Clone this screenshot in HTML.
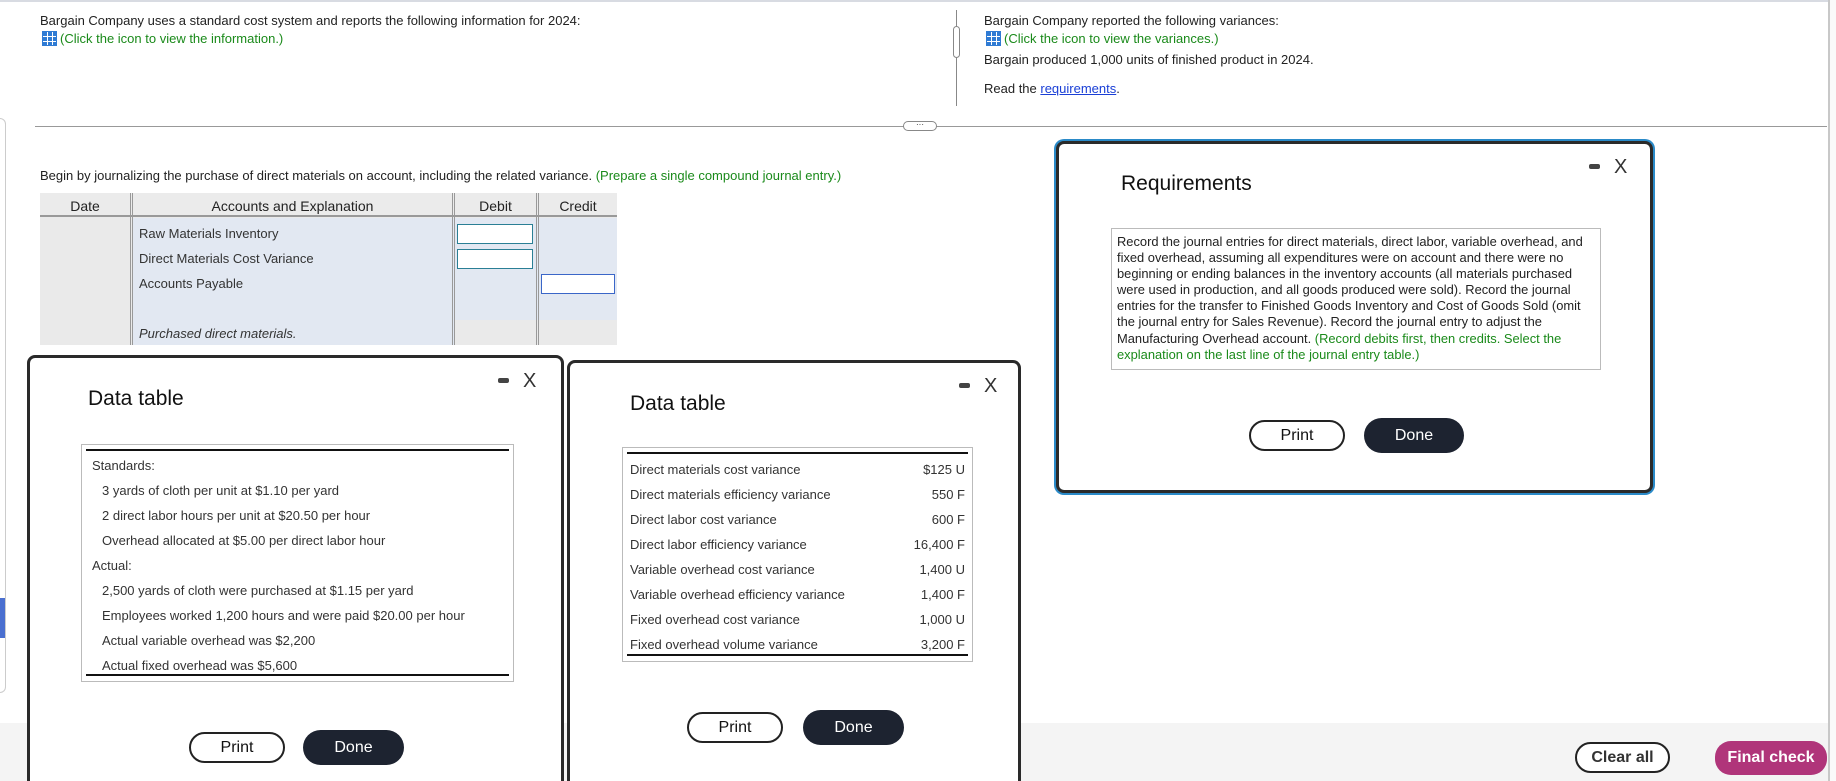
<!DOCTYPE html>
<html style="width:1836px;height:781px;overflow:hidden"><head><meta charset="utf-8"><style>
*{margin:0;padding:0;box-sizing:border-box}
body{width:1836px;height:781px;overflow:hidden;background:#fff;font-family:"Liberation Sans",Arial,sans-serif;color:#222;font-size:13px}
#w{position:relative;width:1836px;height:781px;overflow:hidden}
.a{position:absolute}
.g{color:#1a8a1a}
.icon{display:inline-block;width:15px;height:15px;vertical-align:-3px;margin-right:3px;background:
linear-gradient(#fff,#fff) 4px 0/1px 15px no-repeat,linear-gradient(#fff,#fff) 9px 0/1px 15px no-repeat,
linear-gradient(#fff,#fff) 0 4px/15px 1px no-repeat,linear-gradient(#fff,#fff) 0 9px/15px 1px no-repeat,#2f7bd4;border:1px solid #2f7bd4}
.modal{position:absolute;background:#fff;border:3px solid #2a2a2a;border-radius:8px}
.title{position:absolute;font-size:21px;color:#111}
.mx{position:absolute;font-size:20px;color:#333}
.mx b{display:inline-block;width:11px;height:5px;background:#444;border-radius:2px;vertical-align:4px;margin-right:14px}
.btn{position:absolute;height:31px;border-radius:16px;font-size:16px;text-align:center;line-height:28px}
.pr{border:2px solid #222;background:#fff;color:#111}
.dn{background:#1d2330;color:#fff;line-height:31px}
.row{position:absolute;font-size:13px;color:#333}
</style></head><body><div id="w">
<div class="a" style="left:0;top:0;width:1836px;height:2px;background:#d8dbe2"></div>
<div class="a" style="left:0;top:118px;width:6px;height:575px;border:1px solid #ccc;border-left:none;border-radius:0 6px 6px 0"></div>
<div class="a" style="left:0;top:598px;width:5px;height:40px;background:#4a6fd0"></div>
<div class="a" style="left:0;top:752px;font-size:16px;font-weight:bold;color:#222">e s</div>

<div class="a" style="left:40px;top:13px">Bargain Company uses a standard cost system and reports the following information for 2024:</div>
<div class="a g" style="left:42px;top:31px"><span class="icon"></span>(Click the icon to view the information.)</div>

<div class="a" style="left:956px;top:10px;width:1px;height:96px;background:#888"></div>
<div class="a" style="left:953px;top:26px;width:7px;height:32px;border:1px solid #888;border-radius:4px;background:#fff"></div>
<div class="a" style="left:984px;top:13px">Bargain Company reported the following variances:</div>
<div class="a g" style="left:986px;top:31px"><span class="icon"></span>(Click the icon to view the variances.)</div>
<div class="a" style="left:984px;top:52px">Bargain produced 1,000 units of finished product in 2024.</div>
<div class="a" style="left:984px;top:81px">Read the <span style="color:#1a3fd6;text-decoration:underline">requirements</span>.</div>

<div class="a" style="left:35px;top:126px;width:1792px;height:1px;background:#999"></div>
<div class="a" style="left:903px;top:121px;width:34px;height:10px;border:1px solid #888;border-radius:5px;background:#fff;font-size:8px;line-height:6px;text-align:center">···</div>

<div class="a" style="left:40px;top:168px">Begin by journalizing the purchase of direct materials on account, including the related variance. <span class="g">(Prepare a single compound journal entry.)</span></div>
<div class="a" style="left:40px;top:193px;width:577px;height:152px;background:#eaeaea"></div>
<div class="a" style="left:40px;top:193px;width:577px;height:24px;background:#ebebeb;border-bottom:2px solid #999"></div>
<div class="a" style="left:132px;top:218px;width:322px;height:127px;background:#e2e8f2"></div>
<div class="a" style="left:454px;top:218px;width:163px;height:102px;background:#e2e8f2"></div>
<div class="a" style="left:130px;top:193px;width:3px;height:152px;border-left:1px solid #999;border-right:1px solid #999"></div>
<div class="a" style="left:452px;top:193px;width:3px;height:152px;border-left:1px solid #999;border-right:1px solid #999"></div>
<div class="a" style="left:536px;top:193px;width:3px;height:152px;border-left:1px solid #999;border-right:1px solid #999"></div>
<div class="a" style="left:40px;top:198px;width:90px;text-align:center;font-size:14px">Date</div>
<div class="a" style="left:133px;top:198px;width:319px;text-align:center;font-size:14px">Accounts and Explanation</div>
<div class="a" style="left:455px;top:198px;width:81px;text-align:center;font-size:14px">Debit</div>
<div class="a" style="left:539px;top:198px;width:78px;text-align:center;font-size:14px">Credit</div>
<div class="row" style="left:139px;top:226px">Raw Materials Inventory</div>
<div class="row" style="left:139px;top:251px">Direct Materials Cost Variance</div>
<div class="row" style="left:139px;top:276px">Accounts Payable</div>
<div class="row" style="left:139px;top:326px;font-style:italic">Purchased direct materials.</div>
<div class="a" style="left:457px;top:224px;width:76px;height:20px;border:1px solid #2a7f95;background:#fff"></div>
<div class="a" style="left:457px;top:249px;width:76px;height:20px;border:1px solid #2a7f95;background:#fff"></div>
<div class="a" style="left:541px;top:274px;width:74px;height:20px;border:1px solid #3a66c8;background:#fff"></div>

<div class="a" style="left:0;top:723px;width:1828px;height:58px;background:#f4f4f4"></div>
<div class="a" style="left:1828px;top:0;width:8px;height:781px;background:#fafafa;border-left:2px solid #c8c8c8"></div>
<div class="btn pr" style="left:1575px;top:742px;width:95px;font-weight:bold;color:#333">Clear all</div>
<div class="btn" style="left:1715px;top:741px;width:112px;height:34px;line-height:34px;background:#b0357a;color:#fff;font-weight:bold">Final check</div>

<div class="modal" style="left:27px;top:355px;width:537px;height:440px">
<div class="title" style="left:58px;top:29px">Data table</div>
<div class="mx" style="left:468px;top:12px"><b></b>X</div>
<div class="a" style="left:51px;top:86px;width:433px;height:238px;border:1px solid #bbb"></div>
<div class="a" style="left:56px;top:91px;width:423px;height:2px;background:#111"></div>
<div class="a" style="left:56px;top:316px;width:423px;height:2px;background:#111"></div>
<div class="row" style="left:62px;top:100px">Standards:</div>
<div class="row" style="left:72px;top:125px">3 yards of cloth per unit at $1.10 per yard</div>
<div class="row" style="left:72px;top:150px">2 direct labor hours per unit at $20.50 per hour</div>
<div class="row" style="left:72px;top:175px">Overhead allocated at $5.00 per direct labor hour</div>
<div class="row" style="left:62px;top:200px">Actual:</div>
<div class="row" style="left:72px;top:225px">2,500 yards of cloth were purchased at $1.15 per yard</div>
<div class="row" style="left:72px;top:250px">Employees worked 1,200 hours and were paid $20.00 per hour</div>
<div class="row" style="left:72px;top:275px">Actual variable overhead was $2,200</div>
<div class="row" style="left:72px;top:300px">Actual fixed overhead was $5,600</div>
<div class="btn pr" style="left:159px;top:374px;width:96px">Print</div>
<div class="btn dn" style="left:273px;top:372px;width:101px;height:35px;line-height:35px;border-radius:18px">Done</div>
</div>

<div class="modal" style="left:567px;top:360px;width:454px;height:440px">
<div class="title" style="left:60px;top:29px">Data table</div>
<div class="mx" style="left:389px;top:12px"><b></b>X</div>
<div class="a" style="left:52px;top:84px;width:351px;height:215px;border:1px solid #bbb"></div>
<div class="a" style="left:57px;top:89px;width:341px;height:2px;background:#111"></div>
<div class="a" style="left:57px;top:291px;width:341px;height:2px;background:#111"></div>
<div class="row" style="left:60px;top:99px">Direct materials cost variance</div><div class="row" style="left:340px;top:99px;width:55px;text-align:right">$125 U</div>
<div class="row" style="left:60px;top:124px">Direct materials efficiency variance</div><div class="row" style="left:340px;top:124px;width:55px;text-align:right">550 F</div>
<div class="row" style="left:60px;top:149px">Direct labor cost variance</div><div class="row" style="left:340px;top:149px;width:55px;text-align:right">600 F</div>
<div class="row" style="left:60px;top:174px">Direct labor efficiency variance</div><div class="row" style="left:340px;top:174px;width:55px;text-align:right">16,400 F</div>
<div class="row" style="left:60px;top:199px">Variable overhead cost variance</div><div class="row" style="left:340px;top:199px;width:55px;text-align:right">1,400 U</div>
<div class="row" style="left:60px;top:224px">Variable overhead efficiency variance</div><div class="row" style="left:340px;top:224px;width:55px;text-align:right">1,400 F</div>
<div class="row" style="left:60px;top:249px">Fixed overhead cost variance</div><div class="row" style="left:340px;top:249px;width:55px;text-align:right">1,000 U</div>
<div class="row" style="left:60px;top:274px">Fixed overhead volume variance</div><div class="row" style="left:340px;top:274px;width:55px;text-align:right">3,200 F</div>
<div class="btn pr" style="left:117px;top:349px;width:96px">Print</div>
<div class="btn dn" style="left:233px;top:347px;width:101px;height:35px;line-height:35px;border-radius:18px">Done</div>
</div>

<div class="modal" style="left:1056px;top:141px;width:597px;height:352px;box-shadow:0 0 0 2px #2a8ac8">
<div class="title" style="left:62px;top:28px">Requirements</div>
<div class="mx" style="left:530px;top:12px"><b></b>X</div>
<div class="a" style="left:52px;top:84px;width:490px;height:142px;border:1px solid #bbb;padding:5px 5px;font-size:12.9px;line-height:16.1px;color:#222">Record the journal entries for direct materials, direct labor, variable overhead, and fixed overhead, assuming all expenditures were on account and there were no beginning or ending balances in the inventory accounts (all materials purchased were used in production, and all goods produced were sold). Record the journal entries for the transfer to Finished Goods Inventory and Cost of Goods Sold (omit the journal entry for Sales Revenue). Record the journal entry to adjust the Manufacturing Overhead account. <span class="g">(Record debits first, then credits. Select the explanation on the last line of the journal entry table.)</span></div>
<div class="btn pr" style="left:190px;top:276px;width:96px">Print</div>
<div class="btn dn" style="left:305px;top:274px;width:100px;height:35px;line-height:35px;border-radius:18px">Done</div>
</div>
</div></body></html>
